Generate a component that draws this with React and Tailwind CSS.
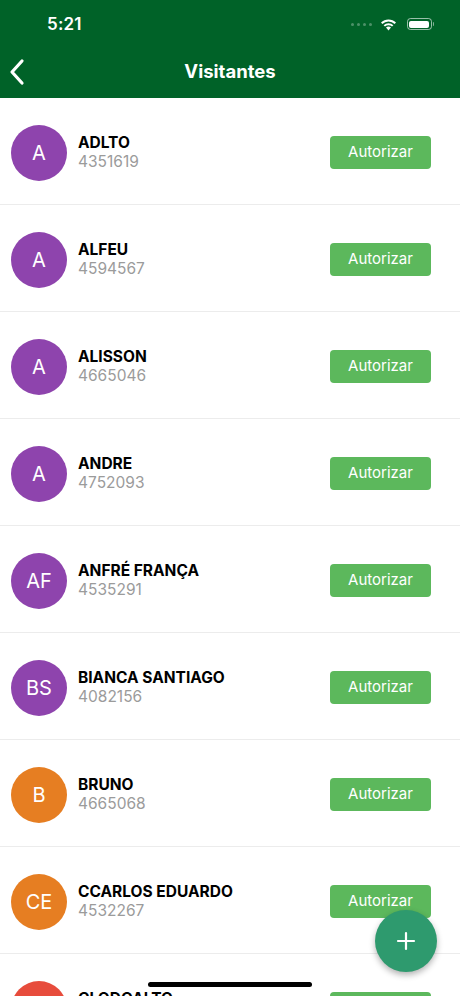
import React from "react";

const people = [
  { i: "A", name: "ADLTO", num: "4351619", c: "bg-[#8e44ad]" },
  { i: "A", name: "ALFEU", num: "4594567", c: "bg-[#8e44ad]" },
  { i: "A", name: "ALISSON", num: "4665046", c: "bg-[#8e44ad]" },
  { i: "A", name: "ANDRE", num: "4752093", c: "bg-[#8e44ad]" },
  { i: "AF", name: "ANFRÉ FRANÇA", num: "4535291", c: "bg-[#8e44ad]" },
  { i: "BS", name: "BIANCA SANTIAGO", num: "4082156", c: "bg-[#8e44ad]" },
  { i: "B", name: "BRUNO", num: "4665068", c: "bg-[#e67e22]" },
  { i: "CE", name: "CCARLOS EDUARDO", num: "4532267", c: "bg-[#e67e22]" },
  { i: "C", name: "CLODOALTO", num: "4532268", c: "bg-[#e74c3c]" },
];

export default function App() {
  return (
    <div className="relative w-[460px] h-[996px] overflow-hidden bg-white font-['Inter',_'Noto_Sans',_sans-serif]">
      <div className="bg-[#006228] h-[98px] flex flex-col">
        <div className="h-[48px] flex items-center justify-between pl-[47px] pr-[26px]">
          <span className="text-white text-[17px] font-semibold tracking-[0.2px] mt-[1px]">5:21</span>
          <div className="flex items-center gap-[6px]">
            <div className="flex gap-[3px] mr-[2px]">
              <span className="w-[3px] h-[3px] rounded-full bg-white/30" />
              <span className="w-[3px] h-[3px] rounded-full bg-white/30" />
              <span className="w-[3px] h-[3px] rounded-full bg-white/30" />
              <span className="w-[3px] h-[3px] rounded-full bg-white/30" />
            </div>
            <svg width="17" height="13" viewBox="0 0 17 13">
              <path d="M8.5 12.5 L6 9.6 A3.6 3.6 0 0 1 11 9.6 Z" fill="white" />
              <path d="M3.6 7.2 A7 7 0 0 1 13.4 7.2 L12 8.6 A5 5 0 0 0 5 8.6 Z" fill="white" />
              <path d="M1 4.6 A10.6 10.6 0 0 1 16 4.6 L14.6 6 A8.6 8.6 0 0 0 2.4 6 Z" fill="white" />
            </svg>
            <div className="flex items-center ml-[4px]">
              <div className="w-[25px] h-[12px] rounded-[3.5px] border border-white/60 p-[1.5px]">
                <div className="w-full h-full bg-white rounded-[2px]" />
              </div>
              <div className="w-[1.5px] h-[4px] bg-white/50 ml-[1px] rounded-r" />
            </div>
          </div>
        </div>
        <div className="relative flex-1 flex items-center justify-center">
          <svg className="absolute left-[9px] top-[10px]" width="16" height="28" viewBox="0 0 16 28">
            <path d="M13 3 L3 14 L13 25" fill="none" stroke="white" strokeWidth="3.2" strokeLinecap="round" strokeLinejoin="round" />
          </svg>
          <span className="text-white text-[18.5px] font-bold -mt-[2px]">Visitantes</span>
        </div>
      </div>
      <div className="flex flex-col">
        {people.map((p, k) => (
          <div key={k} className="h-[107px] shrink-0 border-b-[1.5px] border-[#ececec] flex items-center pt-[3px] pl-[11px] pr-[29px]">
            <div className={`w-[56px] h-[56px] rounded-full ${p.c} flex items-center justify-center text-white text-[20px]`}>
              {p.i}
            </div>
            <div className="ml-[11px] flex-1 flex flex-col -mt-[1px]">
              <span className="text-black text-[15.5px] font-bold leading-[19px]">{p.name}</span>
              <span className="text-[#9b9b9b] text-[15.5px] leading-[19px]">{p.num}</span>
            </div>
            <button className="w-[101px] h-[33px] rounded-[4px] bg-[#5cb85c] text-white text-[15px]">Autorizar</button>
          </div>
        ))}
      </div>
      <div className="absolute right-[23px] bottom-[24px] w-[62px] h-[62px] rounded-full bg-[#2e9a6e] shadow-[0_3px_6px_rgba(0,0,0,0.3)] flex items-center justify-center">
        <svg width="20" height="20" viewBox="0 0 20 20">
          <path d="M10 2 V18 M2 10 H18" stroke="white" strokeWidth="2.2" strokeLinecap="round" />
        </svg>
      </div>
      <div className="absolute left-[148px] bottom-[9px] w-[164px] h-[5px] rounded-full bg-black" />
    </div>
  );
}
